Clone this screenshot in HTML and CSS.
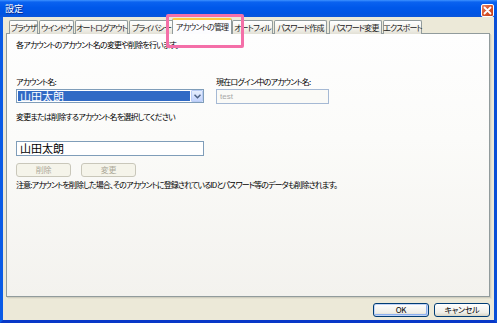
FILE: index.html
```html
<!DOCTYPE html>
<html lang="ja">
<head>
<meta charset="utf-8">
<title>設定</title>
<link rel="stylesheet" href="styles.css">
</head>
<body>
<div class="window">
  <div class="titlebar">
    <span class="title">設定</span>
    <span class="close">
      <svg width="13" height="13" viewBox="0 0 13 13"><path d="M3.5 3.5 L9.5 9.5 M9.5 3.5 L3.5 9.5" stroke="#fff" stroke-width="1.8" stroke-linecap="round"/></svg>
    </span>
  </div>
  <div class="body">
    <div class="tabs">
      <div class="tab t1">ブラウザ</div>
      <div class="tab t2">ウインドウ</div>
      <div class="tab t3">オートログアウト</div>
      <div class="tab t4">プライバシー</div>
      <div class="tab active t5">アカウントの管理</div>
      <div class="tab t6">オートフィル</div>
      <div class="tab t7">パスワード作成</div>
      <div class="tab t8">パスワード変更</div>
      <div class="tab t9">エクスポート</div>
    </div>
    <div class="panel">
      <p class="desc">各アカウントのアカウント名の変更や削除を行います。</p>
      <div class="fields">
        <div class="field">
          <div class="label">アカウント名:</div>
          <div class="select">
            <span class="sel-text">山田太朗</span>
            <span class="drop">
              <svg width="7" height="5" viewBox="0 0 7 5"><path d="M0.5 0.8 L3.5 3.8 L6.5 0.8" fill="none" stroke="#4D6185" stroke-width="1.5"/></svg>
            </span>
          </div>
        </div>
        <div class="field">
          <div class="label">現在ログイン中のアカウント名:</div>
          <div class="readonly">test</div>
        </div>
      </div>
      <p class="hint">変更または削除するアカウント名を選択してください</p>
      <div class="textbox">山田太朗</div>
      <div class="btnrow">
        <span class="btn disabled">削除</span>
        <span class="btn disabled">変更</span>
      </div>
      <p class="note">注意:アカウントを削除した場合、そのアカウントに登録されているIDとパスワード等のデータも削除されます。</p>
    </div>
    <div class="footer">
      <span class="btn default">OK</span>
      <span class="btn">キャンセル</span>
    </div>
  </div>
</div>
</body>
</html>
```
FILE: styles.css
```css
* { box-sizing: border-box; }
html, body { margin: 0; padding: 0; }
body {
  width: 497px;
  height: 323px;
  overflow: hidden;
  font-family: "Noto Sans CJK JP", "Noto Sans", sans-serif;
  font-size: 8px;
  letter-spacing: -0.8px;
  font-feature-settings: "palt";
  color: #000;
}
.window {
  width: 497px;
  height: 323px;
  display: flex;
  flex-direction: column;
  background: #0054E3;
  border-left: 3px solid #0A5BE6;
  border-right: 3px solid #0A4FD6;
  border-bottom: 3px solid #0838C8;
}
.titlebar {
  height: 17px;
  margin: 0 -3px;
  padding: 0 3px 0 4px;
  display: flex;
  align-items: center;
  justify-content: space-between;
  background: linear-gradient(#3E92FF 0%, #0A62F0 12%, #0058EA 45%, #0054E3 80%, #0A55DA 100%);
}
.title {
  color: #fff;
  font-size: 9px;
  letter-spacing: 0;
  line-height: 1;
  padding-left: 1px;
  text-shadow: 1px 1px 0 #0A2A8A;
}
.close {
  width: 13px;
  height: 13px;
  margin-top: 3px;
  border: 1px solid #fff;
  border-radius: 2px;
  background: linear-gradient(135deg, #E9866A 0%, #D9562E 45%, #C3421C 100%);
  display: flex;
  align-items: center;
  justify-content: center;
}
.close svg { display: block; margin: -1px; }
.body {
  flex: 1;
  background: #ECE9D8;
  display: flex;
  flex-direction: column;
}
.tabs {
  display: flex;
  align-items: flex-end;
  height: 17px;
  padding-left: 6px;
  position: relative;
  z-index: 2;
  margin-bottom: -1px;
}
.tab {
  height: 14px;
  border: 1px solid #919B9C;
  border-bottom: none;
  border-radius: 2px 2px 0 0;
  background: linear-gradient(#FFFFFF, #F2F1EA 60%, #E3E1D6);
  display: flex;
  align-items: center;
  justify-content: center;
  font-size: 8px;
  line-height: 1;
  margin-right: 1px;
  color: #222;
  white-space: nowrap;
}
.t1 { width: 29px; }
.t2 { width: 35px; }
.t3 { width: 53px; }
.t4 { width: 45px; margin-right: -2px; }
.t5 { width: 60px; }
.t6 { width: 41px; margin-left: -1px; }
.t7 { width: 53px; }
.t8 { width: 53px; margin-left: 1px; }
.t9 { width: 39px; }
.tab.active {
  height: 16px;
  background: #FCFCFE;
  border-top: 2px solid #FFC83C;
  position: relative;
  z-index: 3;
}
.tab.active::after {
  content: "";
  position: absolute;
  left: -7px;
  top: -6px;
  width: 72px;
  height: 28px;
  border: 3px solid #F46FA8;
  border-radius: 2px;
  pointer-events: none;
}
.panel {
  position: relative;
  z-index: 1;
  height: 264px;
  margin: 0 4px 0 3px;
  border: 1px solid #919B9C;
  box-shadow: 1px 1px 0 #D0CEBF, 2px 2px 0 #E3E0D0;
  background: linear-gradient(#FEFEFE 0%, #FBFBF9 40%, #F3F2EE 100%);
  padding: 4px 0 0 9px;
}
p { margin: 0; }
.desc { line-height: 13px; }
.fields {
  display: flex;
  margin-top: 25px;
}
.field { display: flex; flex-direction: column; }
.field:first-child { width: 200px; }
.label { line-height: 12px; }
.select {
  margin-top: 1px;
  width: 188px;
  height: 14px;
  border: 1px solid #7F9DB9;
  background: #fff;
  display: flex;
  align-items: stretch;
  padding: 1px;
}
.sel-text {
  flex: 1;
  background: #316AC5;
  color: #fff;
  font-size: 11px;
  letter-spacing: 0;
  line-height: 10px;
  padding-left: 2px;
  white-space: nowrap;
}
.drop {
  width: 12px;
  margin: -1px -1px -1px 1px;
  background: linear-gradient(#E6EEFC, #C3D3FD);
  border: 1px solid #B9CCF5;
  border-radius: 1px;
  display: flex;
  align-items: center;
  justify-content: center;
}
.readonly {
  margin-top: 1px;
  width: 113px;
  height: 15px;
  border: 1px solid #A5B9D4;
  background: #FAFAF7;
  color: #A8A8A8;
  font-family: "Liberation Sans", sans-serif;
  font-size: 8px;
  letter-spacing: 0;
  line-height: 13px;
  padding-left: 3px;
}
.hint { margin-top: 7px; line-height: 12px; }
.textbox {
  margin-top: 18px;
  width: 188px;
  height: 15px;
  border: 1px solid #7F9DB9;
  background: #fff;
  font-size: 11px;
  letter-spacing: 0;
  line-height: 13px;
  padding-left: 3px;
}
.btnrow {
  display: flex;
  gap: 10px;
  margin-top: 7px;
}
.btn {
  display: flex;
  align-items: center;
  justify-content: center;
  height: 14px;
  border: 1px solid #003C74;
  border-radius: 3px;
  background: linear-gradient(#FFFFFF, #F0EFEA 70%, #D8D4C6);
  font-size: 8px;
  letter-spacing: -0.3px;
  line-height: 1;
  color: #000;
}
.btnrow .btn { width: 55px; }
.btn.disabled {
  border-color: #C9C7BA;
  background: #F5F4EA;
  color: #ACA899;
}
.note { margin-top: 2px; line-height: 12px; letter-spacing: -0.9px; }
.footer {
  display: flex;
  justify-content: flex-end;
  gap: 5px;
  padding: 6px 4px 0 0;
}
.footer .btn { width: 56px; }
.btn.default {
  box-shadow: inset 0 0 0 1px #C2D4F7, inset -1px -1px 0 1px #8CB0EE;
}
```
